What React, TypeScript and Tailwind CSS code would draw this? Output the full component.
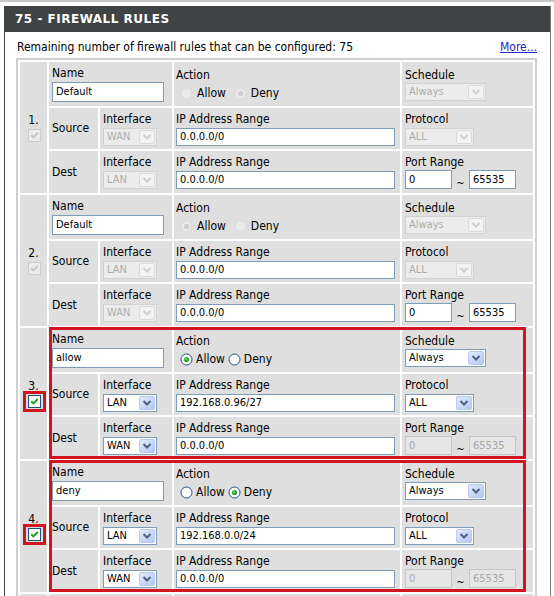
import React from "react";

type Rule = {
  n: string;
  enabled: boolean;
  name: string;
  action: "Allow" | "Deny";
  srcIf: string;
  srcIp: string;
  dstIf: string;
  dstIp: string;
  portsEnabled: boolean;
  mark: boolean;
};

const rules: Rule[] = [
  { n: "1.", enabled: false, name: "Default", action: "Deny", srcIf: "WAN", srcIp: "0.0.0.0/0", dstIf: "LAN", dstIp: "0.0.0.0/0", portsEnabled: true, mark: false },
  { n: "2.", enabled: false, name: "Default", action: "Allow", srcIf: "LAN", srcIp: "0.0.0.0/0", dstIf: "WAN", dstIp: "0.0.0.0/0", portsEnabled: true, mark: false },
  { n: "3.", enabled: true, name: "allow", action: "Allow", srcIf: "LAN", srcIp: "192.168.0.96/27", dstIf: "WAN", dstIp: "0.0.0.0/0", portsEnabled: false, mark: true },
  { n: "4.", enabled: true, name: "deny", action: "Deny", srcIf: "LAN", srcIp: "192.168.0.0/24", dstIf: "WAN", dstIp: "0.0.0.0/0", portsEnabled: false, mark: true },
];

function Chevron({ disabled }: { disabled?: boolean }) {
  return (
    <svg width="16" height="14" viewBox="0 0 16 14" className="block">
      <defs>
        <linearGradient id="xpbtn" x1="0" y1="0" x2="1" y2="1">
          <stop offset="0" stopColor="#e4ecfd" />
          <stop offset="1" stopColor="#b3c6f2" />
        </linearGradient>
      </defs>
      <rect
        x="0.5"
        y="0.5"
        width="15"
        height="13"
        rx="1.5"
        fill={disabled ? "#f3f3f3" : "url(#xpbtn)"}
        stroke={disabled ? "#dadada" : "#b7c9f1"}
      />
      <path d="M4.5 5 L8 8.5 L11.5 5" fill="none" stroke={disabled ? "#cfcfcf" : "#4d6185"} strokeWidth="2" />
    </svg>
  );
}

function Select({ value, disabled, w }: { value: string; disabled?: boolean; w: string }) {
  return (
    <div
      className={`${w} relative flex h-[18px] items-center border pl-[3px] text-[11px] leading-[14px] ${
        disabled ? "border-[#d2d2d2] bg-[#ececec] text-[#adadad]" : "border-[#7f9db9] bg-white text-black"
      }`}
    >
      {value}
      <span className="absolute right-[1px] top-[1px]">
        <Chevron disabled={disabled} />
      </span>
    </div>
  );
}

function Input({ value, disabled, w, h }: { value: string; disabled?: boolean; w: string; h: string }) {
  return (
    <div
      className={`${w} ${h} flex items-center border pl-[3px] text-[11px] leading-[14px] ${
        disabled ? "border-[#c6c6c6] bg-[#e6e6e6] text-[#a8a8a8]" : "border-[#7f9db9] bg-white text-black"
      }`}
    >
      {value}
    </div>
  );
}

function Radio({ checked, disabled }: { checked: boolean; disabled?: boolean }) {
  return (
    <svg width="13" height="13" viewBox="0 0 13 13" className="block shrink-0">
      <circle cx="6.5" cy="6.5" r="5.5" fill={disabled ? "#e9e9e9" : "#ffffff"} stroke={disabled ? "#d9d9d9" : "#1c5180"} />
      {checked && <circle cx="6.5" cy="6.5" r="2.6" fill={disabled ? "#cfcfcf" : "#2aa52a"} />}
      {checked && !disabled && <circle cx="6" cy="6" r="1" fill="#8fe08f" />}
    </svg>
  );
}

function Checkbox({ disabled }: { disabled?: boolean }) {
  return (
    <svg width="13" height="13" viewBox="0 0 13 13" className="block">
      <rect x="0.5" y="0.5" width="12" height="12" fill={disabled ? "#ebebeb" : "#ffffff"} stroke={disabled ? "#cbcbcb" : "#1c5180"} />
      <path d="M3.2 6.2 L5.4 8.4 L9.8 4" fill="none" stroke={disabled ? "#c4c4c4" : "#21a121"} strokeWidth="2" />
    </svg>
  );
}

function RuleBlock({ r }: { r: Rule }) {
  const dis = !r.enabled;
  return (
    <div className="relative grid grid-cols-[27px_49px_72px_226px_131px] grid-rows-[44px_41px_42px] gap-[2px]">
      <div className="row-span-3 flex flex-col items-center justify-center gap-[1px] bg-[#dfdfdf]">
        <span>{r.n}</span>
        <span className="relative ml-[2px] flex">
          <Checkbox disabled={dis} />
          {r.mark && (
            <span className="pointer-events-none absolute -bottom-[4px] -left-[5px] -right-[5px] -top-[4px] border-[3px] border-[#d01420]" />
          )}
        </span>
      </div>

      <div className="col-span-2 flex flex-col justify-center bg-[#dfdfdf] pl-[3px]">
        <span>Name</span>
        <div className="mt-[1px]">
          <Input value={r.name} w="w-[112px]" h="h-[20px]" />
        </div>
      </div>
      <div className="flex flex-col bg-[#dfdfdf] pl-[2px] pt-[6px]">
        <span>Action</span>
        <div className="mt-[2px] flex h-[17px] items-center pl-[4px]">
          <Radio checked={r.action === "Allow"} disabled={dis} />
          <span className={dis ? "ml-[4px]" : "ml-[3px]"}>Allow</span>
          <span className={dis ? "ml-[8px]" : "ml-[3px]"}>
            <Radio checked={r.action === "Deny"} disabled={dis} />
          </span>
          <span className={dis ? "ml-[4px]" : "ml-[3px]"}>Deny</span>
        </div>
      </div>
      <div className="flex flex-col justify-center bg-[#dfdfdf] pl-[3px]">
        <span>Schedule</span>
        <Select value="Always" disabled={dis} w="w-[81px]" />
      </div>

      <div className="flex items-center bg-[#dfdfdf] pl-[3px]">Source</div>
      <div className="flex flex-col justify-center bg-[#dfdfdf] pl-[3px]">
        <span>Interface</span>
        <div className="mt-[1px]">
          <Select value={r.srcIf} disabled={dis} w="w-[54px]" />
        </div>
      </div>
      <div className="flex flex-col justify-center bg-[#dfdfdf] pl-[2px]">
        <span>IP Address Range</span>
        <div className="mt-[1px]">
          <Input value={r.srcIp} w="w-[219px]" h="h-[18px]" />
        </div>
      </div>
      <div className="flex flex-col justify-center bg-[#dfdfdf] pl-[3px]">
        <span>Protocol</span>
        <div className="mt-[1px]">
          <Select value="ALL" disabled={dis} w="w-[69px]" />
        </div>
      </div>

      <div className="flex items-center bg-[#dfdfdf] pl-[3px]">Dest</div>
      <div className="flex flex-col justify-center bg-[#dfdfdf] pl-[3px]">
        <span>Interface</span>
        <div className="mt-[1px]">
          <Select value={r.dstIf} disabled={dis} w="w-[54px]" />
        </div>
      </div>
      <div className="flex flex-col justify-center bg-[#dfdfdf] pl-[2px]">
        <span>IP Address Range</span>
        <div className="mt-[1px]">
          <Input value={r.dstIp} w="w-[219px]" h="h-[18px]" />
        </div>
      </div>
      <div className="flex flex-col justify-center bg-[#dfdfdf] pl-[3px]">
        <span>Port Range</span>
        <div className="flex items-end">
          <Input value="0" disabled={!r.portsEnabled} w="w-[47px]" h="h-[19px]" />
          <span className="w-[17px] text-center text-[11px] leading-[11px]">~</span>
          <Input value="65535" disabled={!r.portsEnabled} w="w-[47px]" h="h-[19px]" />
        </div>
      </div>

      {r.mark && (
        <div className="pointer-events-none absolute -top-[1px] bottom-0 left-[29px] w-[477px] border-[3px] border-[#d01420]" />
      )}
    </div>
  );
}

function StubRow() {
  return (
    <div className="grid h-[44px] grid-cols-[27px_49px_72px_226px_131px] gap-[2px]">
      <div className="bg-[#dfdfdf]" />
      <div className="col-span-2 bg-[#dfdfdf]" />
      <div className="bg-[#dfdfdf]" />
      <div className="bg-[#dfdfdf]" />
    </div>
  );
}

export default function App() {
  return (
    <div className="h-[596px] w-[554px] overflow-hidden bg-white font-['DejaVu_Sans_Condensed','DejaVu_Sans',sans-serif] text-[12px] leading-[15px] text-black">
      <div className="h-[2px] bg-[#c6c6c6]" />
      <div className="ml-[4px] mt-[4px] w-[547px] border-l border-r border-l-[#444444] border-r-[#7c7c7c]">
        <div className="flex h-[26px] items-center bg-[#404343] pl-[10px] font-['DejaVu_Sans',sans-serif] text-[12px] font-bold tracking-[0.5px] text-white">
          75 - FIREWALL RULES
        </div>
        <div className="pl-[11px] pt-[8px]">
          <div className="flex w-[521px] items-center justify-between pl-[1px]">
            <span>Remaining number of firewall rules that can be configured: 75</span>
            <a className="text-[#2727c9] underline">More...</a>
          </div>
          <div className="mt-[3px] flex w-[521px] flex-col gap-[2px] border-2 border-[#cfcfcf] bg-white p-[2px]">
            {rules.map((r) => (
              <RuleBlock key={r.n} r={r} />
            ))}
            <StubRow />
          </div>
        </div>
      </div>
    </div>
  );
}
